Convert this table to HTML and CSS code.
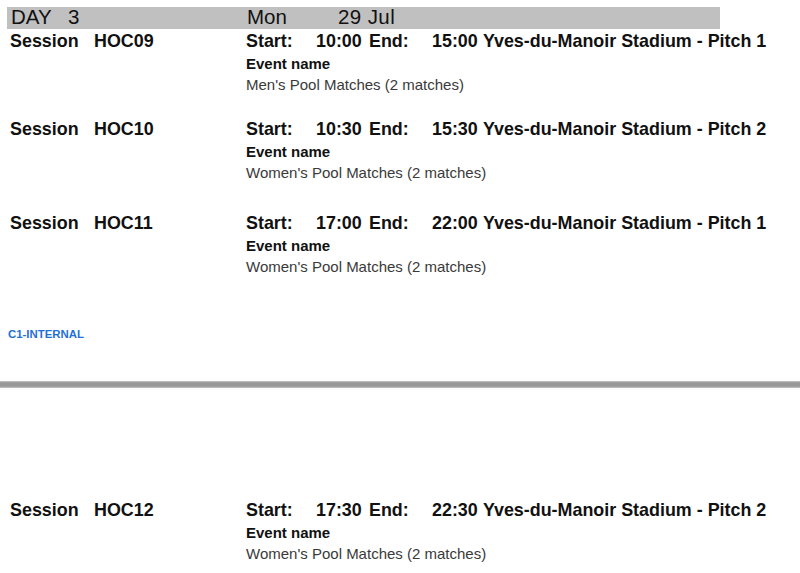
FILE: index.html
```html
<!DOCTYPE html>
<html>
<head>
<meta charset="utf-8">
<link rel="stylesheet" href="styles.css">
</head>
<body>
<div class="band">
  <span class="band-day">DAY</span><span class="band-num">3</span><span class="band-wd">Mon</span><span class="band-date">29 Jul</span>
</div>

<div class="session first gap-a">
  <div class="row">
    <span>Session</span><span>HOC09</span><span>Start:</span><span>10:00</span><span>End:</span><span>15:00</span><span>Yves-du-Manoir Stadium - Pitch 1</span>
  </div>
  <div class="ev-label">Event name</div>
  <div class="ev-desc">Men's Pool Matches (2 matches)</div>
</div>

<div class="session gap-b">
  <div class="row">
    <span>Session</span><span>HOC10</span><span>Start:</span><span>10:30</span><span>End:</span><span>15:30</span><span>Yves-du-Manoir Stadium - Pitch 2</span>
  </div>
  <div class="ev-label">Event name</div>
  <div class="ev-desc">Women's Pool Matches (2 matches)</div>
</div>

<div class="session gap-c">
  <div class="row">
    <span>Session</span><span>HOC11</span><span>Start:</span><span>17:00</span><span>End:</span><span>22:00</span><span>Yves-du-Manoir Stadium - Pitch 1</span>
  </div>
  <div class="ev-label">Event name</div>
  <div class="ev-desc">Women's Pool Matches (2 matches)</div>
</div>

<div class="classif">C1-INTERNAL</div>
<div class="page-break"></div>

<div class="session page-two">
  <div class="row">
    <span>Session</span><span>HOC12</span><span>Start:</span><span>17:30</span><span>End:</span><span>22:30</span><span>Yves-du-Manoir Stadium - Pitch 2</span>
  </div>
  <div class="ev-label">Event name</div>
  <div class="ev-desc">Women's Pool Matches (2 matches)</div>
</div>
</body>
</html>
```

FILE: styles.css
```css
html, body {
  margin: 0;
  padding: 0;
  background: #ffffff;
}
body {
  font-family: "Liberation Sans", Arial, sans-serif;
  color: #111111;
  width: 800px;
  height: 573px;
  overflow: hidden;
}
.band {
  margin: 7px 0 0 7px;
  width: 713px;
  height: 22px;
  background: #c0c0c0;
  display: flex;
  font-size: 20.5px;
  line-height: 20px;
  color: #111111;
  white-space: nowrap;
}
.band-day { width: 57px; padding-left: 4px; }
.band-num { width: 179px; }
.band-wd { width: 91px; }
.band-date { letter-spacing: 0.4px; }
.session {
  display: flex;
  flex-direction: column;
  margin-top: 1px;
}
.session.first { margin-top: 2px; }
.gap-a { height: 87px; }
.gap-b { height: 93px; }
.gap-c { height: 93px; }
.row {
  display: grid;
  grid-template-columns: 84px 152px 70px 53px 63px 51px auto;
  padding-left: 10px;
  font-weight: bold;
  font-size: 17.9px;
  line-height: 20px;
  white-space: nowrap;
}
.ev-label {
  margin: 6px 0 0 246px;
  font-weight: bold;
  font-size: 15px;
  line-height: 14px;
}
.ev-desc {
  margin: 7px 0 0 246px;
  font-size: 15px;
  line-height: 14px;
  color: #3a3a3a;
}
.classif {
  margin: 22px 0 0 8px;
  font-size: 11.4px;
  line-height: 13px;
  font-weight: bold;
  color: #1f6fd8;
}
.page-break {
  margin-top: 40px;
  height: 7px;
  background: linear-gradient(#c8c8c8, #9a9a9a 25%, #9a9a9a 75%, #c8c8c8);
}
.session.page-two {
  margin-top: 112px;
}
```
